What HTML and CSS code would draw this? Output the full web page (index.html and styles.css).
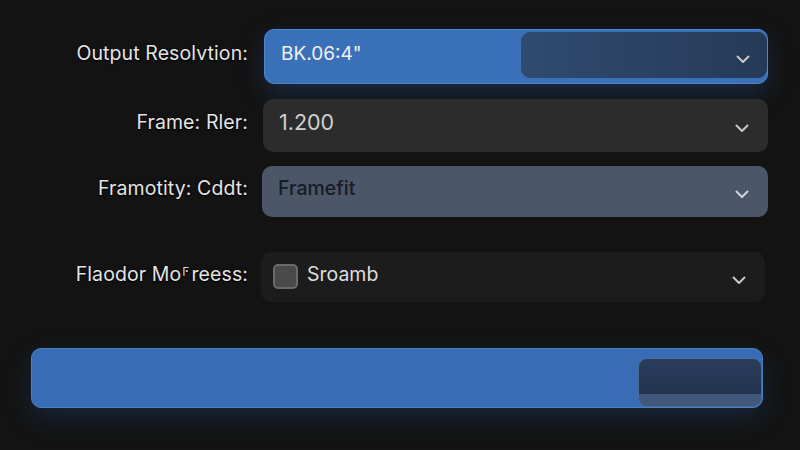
FILE: index.html
```html
<!DOCTYPE html>
<html lang="en">
	<head>
		<meta charset="utf-8" />
		<title>Export Settings</title>
		<link rel="stylesheet" href="styles.css">
	</head>
	<body>
		<div class="panel">
			<div class="row row-first">
				<label class="label">Output Resolvtion:</label>
				<div class="select select-blue">
					<span class="value">BK.06:4"</span>
					<div class="split">
						<svg class="chev" width="14" height="9" viewBox="0 0 14 9"><path d="M1.5 1.5 L7 7 L12.5 1.5" /></svg>
					</div>
				</div>
			</div>
			<div class="row row-second">
				<label class="label">Frame: Rler:</label>
				<div class="select select-grey">
					<span class="value">1.200</span>
					<svg class="chev" width="14" height="9" viewBox="0 0 14 9"><path d="M1.5 1.5 L7 7 L12.5 1.5" /></svg>
				</div>
			</div>
			<div class="row row-third">
				<label class="label">Framotity: Cddt:</label>
				<div class="select select-slate">
					<span class="value">Framefit</span>
					<svg class="chev" width="14" height="9" viewBox="0 0 14 9"><path d="M1.5 1.5 L7 7 L12.5 1.5" /></svg>
				</div>
			</div>
			<div class="row row-fourth">
				<label class="label">Flaodor Mo&#x2e01;reess:</label>
				<div class="select select-dark">
					<span class="check"></span>
					<span class="value">Sroamb</span>
					<svg class="chev" width="14" height="9" viewBox="0 0 14 9"><path d="M1.5 1.5 L7 7 L12.5 1.5" /></svg>
				</div>
			</div>
			<div class="progress">
				<div class="progress-fill"></div>
				<div class="progress-knob"></div>
			</div>
		</div>
	</body>
</html>
```

FILE: styles.css
```css
html, body {
	margin: 0;
	height: 100%;
}
body {
	background: #131313;
	font-family: Inter, "Open Sans", sans-serif;
	color: #e2e2e2;
	overflow: hidden;
}
.panel {
	display: flex;
	flex-direction: column;
	padding: 29px 32px 0 31px;
}
.row {
	display: grid;
	grid-template-columns: 217px 1fr;
	column-gap: 15px;
	align-items: center;
}
.row-second { margin-top: 15px; }
.row-third { margin-top: 14px; }
.row-fourth { margin-top: 35px; margin-right: 3px; }
.label {
	text-align: right;
	font-size: 19.5px;
	letter-spacing: 0.1px;
	color: #e4e4e4;
	text-shadow: 0 0 2px rgba(0,0,0,0.9), 0 1px 1px #000;
	white-space: nowrap;
	padding-bottom: 8px;
}
.select {
	display: flex;
	align-items: center;
	border-radius: 10px;
	font-size: 19px;
	position: relative;
}
.value {
	flex: 1;
	padding-bottom: 7px;
}
.chev {
	fill: none;
	stroke: #c8c8c8;
	stroke-width: 2;
	stroke-linecap: round;
	stroke-linejoin: round;
	margin-right: 19px;
	margin-top: 6px;
}
.select-blue {
	height: 53px;
	margin-left: 1px;
	background: #3a70b8;
	border: 1px solid #4f86cf;
	box-shadow: 0 10px 24px rgba(40, 80, 140, 0.35);
	padding-left: 16px;
	overflow: hidden;
	color: #f0f0f0;
}
.split {
	align-self: stretch;
	width: 246px;
	margin: 2px 0 5px;
	border-radius: 9px;
	background: linear-gradient(90deg, #2f4b70, #263a57);
	display: flex;
	align-items: center;
	justify-content: flex-end;
}
.split .chev {
	margin-right: 17px;
	margin-top: 8px;
}
.select-grey {
	height: 53px;
	background: #2c2c2c;
	padding-left: 16px;
	color: #cfcfcf;
	font-size: 21.5px;
}
.select-slate {
	height: 51px;
	margin-left: -1px;
	background: #4b5669;
	padding-left: 16px;
	color: #161c26;
	font-size: 19.5px;
	font-weight: 500;
}
.select-slate .chev { stroke: #d0d4da; }
.select-dark {
	height: 50px;
	margin-left: -2px;
	background: #1c1c1c;
	padding-left: 12px;
	color: #dedede;
	font-size: 19.5px;
}
.check {
	width: 21px;
	height: 21px;
	border: 2px solid #6a6a6a;
	border-radius: 5px;
	background: #4a4a4a;
	margin-right: 9px;
	margin-bottom: 2px;
}
.progress {
	margin-top: 46px;
	margin-right: 5px;
	height: 58px;
	border-radius: 10px;
	background: #386db5;
	border: 1px solid #4b7fc6;
	box-shadow: 0 10px 26px rgba(40, 80, 140, 0.3);
	display: flex;
	overflow: hidden;
}
.progress-fill {
	flex: 1;
}
.progress-knob {
	width: 122px;
	margin-top: 9px;
	border: 1px solid #4a6a95;
	border-radius: 9px;
	background: linear-gradient(180deg, #2a3d5c 0, #22344f 74%, #3f5879 75%, #3f5879 100%);
}
```
